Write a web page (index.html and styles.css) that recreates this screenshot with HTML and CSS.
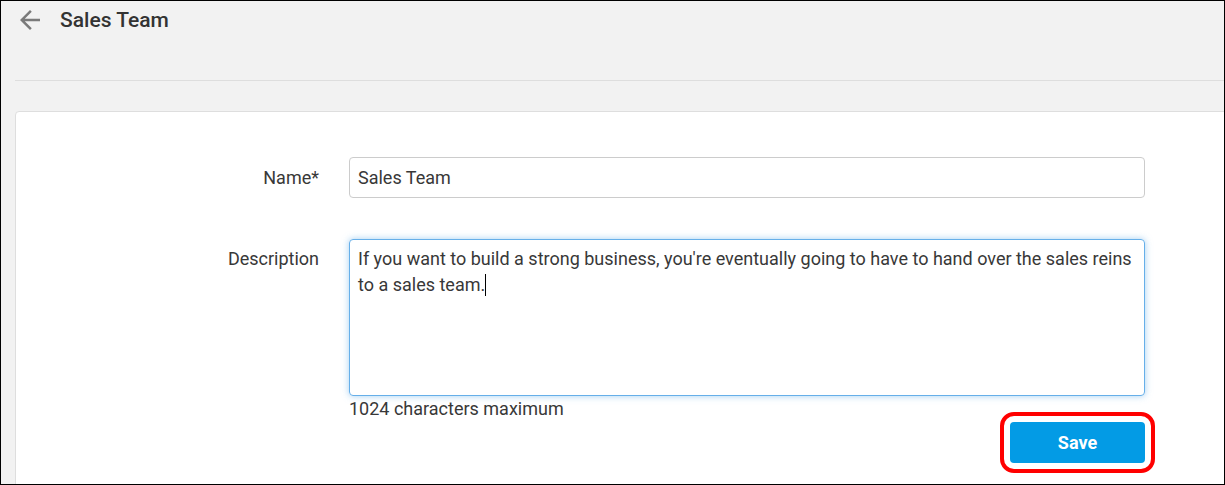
FILE: index.html
```html
<!DOCTYPE html>
<html lang="en">
<head>
<meta charset="utf-8">
<title>Sales Team</title>
<link rel="stylesheet" href="styles.css">
</head>
<body>
<div class="frame">
  <header class="topbar">
    <div class="title-row">
      <span class="back" aria-label="Back">
        <svg viewBox="0 0 24 24" width="30" height="30"><path d="M20 11H7.83l5.59-5.59L12 4l-8 8 8 8 1.41-1.41L7.83 13H20v-2z" fill="currentColor"/></svg>
      </span>
      <h1 class="title">Sales Team</h1>
    </div>
  </header>
  <main class="card">
    <div class="row">
      <label class="label">Name*</label>
      <div class="field">
        <div class="input">Sales Team</div>
      </div>
    </div>
    <div class="row row-desc">
      <label class="label label-top">Description</label>
      <div class="field">
        <div class="textarea">If you want to build a strong business, you're eventually going to have to hand over the sales reins to a sales team.<span class="caret"></span></div>
        <div class="hint">1024 characters maximum</div>
        <div class="actions">
          <button class="save">Save</button>
        </div>
      </div>
    </div>
  </main>
</div>
</body>
</html>
```
FILE: styles.css
```css
* { box-sizing: border-box; }
html, body { margin: 0; padding: 0; }
body {
  font-family: Roboto, "Liberation Sans", Arial, sans-serif;
  color: #333;
  background: #f2f2f2;
}
.frame {
  width: 1225px;
  height: 485px;
  border: 1px solid #000;
  background: #f2f2f2;
  overflow: hidden;
}
.topbar {
  height: 80px;
  margin-left: 14px;
  border-bottom: 1px solid #dedede;
}
.title-row {
  height: 37px;
  display: flex;
  align-items: center;
}
.back {
  width: 30px;
  height: 30px;
  color: #7a7a7a;
  display: flex;
}
.title {
  margin: 0 0 0 15px;
  font-size: 21px;
  font-weight: 500;
  color: #333;
}
.card {
  margin: 30px -12px 0 14px;
  background: #fff;
  border: 1px solid #dedede;
  border-radius: 4px;
  padding-top: 45px;
  height: 420px;
}
.row {
  display: flex;
  gap: 30px;
  align-items: center;
}
.row-desc {
  margin-top: 41px;
  align-items: flex-start;
}
.label {
  width: 303px;
  text-align: right;
  font-size: 18px;
  line-height: 26px;
  color: #383838;
}
.label-top { padding-top: 7px; }
.field { width: 796px; }
.input {
  height: 41px;
  border: 1px solid #cccccc;
  border-radius: 4px;
  padding: 0 8px;
  font-size: 18px;
  line-height: 39px;
  color: #383838;
}
.textarea {
  height: 157px;
  border: 1px solid #66afe9;
  border-radius: 4px;
  padding: 6px 8px;
  font-size: 18px;
  line-height: 26px;
  color: #383838;
  box-shadow: 0 0 7px rgba(102, 175, 233, 0.6);
}
.caret {
  display: inline-block;
  width: 1px;
  height: 22px;
  background: #000;
  vertical-align: -5px;
}
.hint {
  margin-top: 3px;
  font-size: 18px;
  line-height: 20px;
  color: #383838;
}
.actions {
  margin-top: 3px;
  display: flex;
  justify-content: flex-end;
}
.save {
  width: 135px;
  height: 41px;
  border: none;
  border-radius: 4px;
  background: #039be5;
  color: #fff;
  font-family: Roboto, "Liberation Sans", Arial, sans-serif;
  font-size: 18px;
  font-weight: 700;
  outline: 4px solid #f00;
  outline-offset: 6px;
}
```
